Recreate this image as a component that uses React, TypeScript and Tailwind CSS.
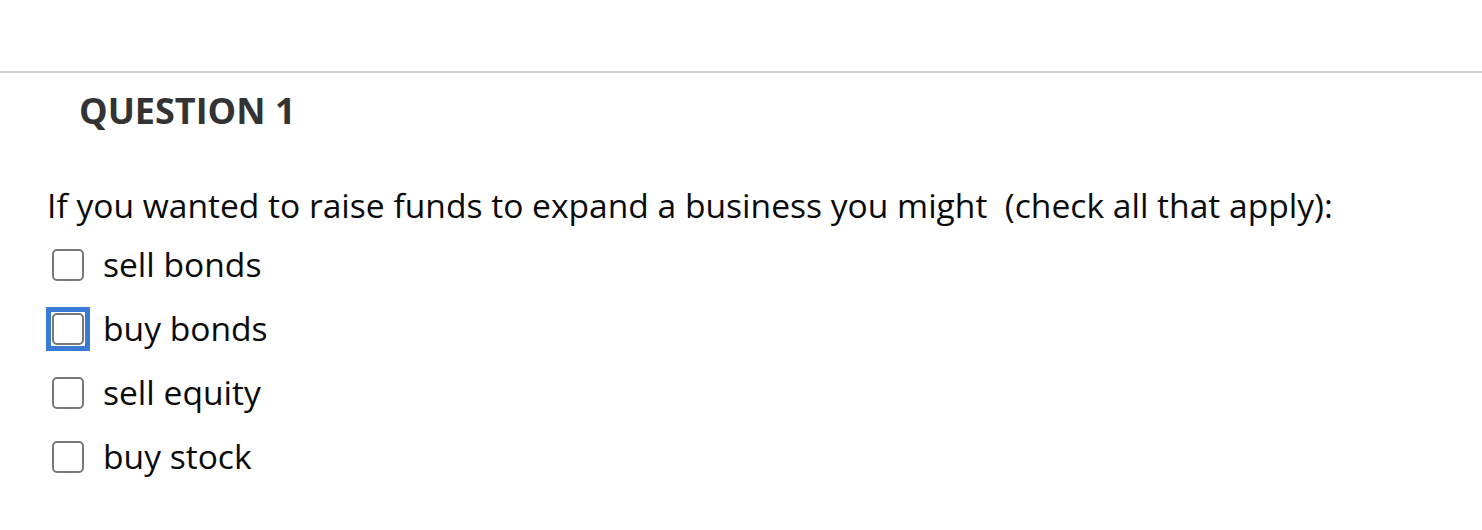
import React from "react";

const options = ["sell bonds", "buy bonds", "sell equity", "buy stock"];

function Box({ focused }: { focused?: boolean }) {
  return (
    <span className="relative mt-[7px] block h-[32px] w-[32px] shrink-0">
      {focused && (
        <span className="absolute -inset-[6px] border-[5px] border-[#3a7bd5] bg-white" />
      )}
      <span className="absolute inset-0 rounded-[5px] border-[2.5px] border-[#777777] bg-white" />
    </span>
  );
}

export default function App() {
  return (
    <div className="min-h-[530px] w-full bg-white" style={{ fontFamily: '"Open Sans", sans-serif' }}>
      <div className="h-[71px]" />
      <div className="h-[2px] bg-[#d3d3d3]" />
      <h1 className="mt-[14px] pl-[79px] text-[36px] font-bold leading-[48px] text-[#333333]">
        QUESTION 1
      </h1>
      <p className="mt-[48px] pl-[47px] text-[33.6px] leading-[44px] text-[#0a0a0a] whitespace-pre">
        If you wanted to raise funds to expand a business you might  (check all that apply):
      </p>
      <div className="mt-[15px] flex flex-col gap-[20px] pl-[52px]">
        {options.map((o, i) => (
          <label key={o} className="flex items-start gap-[19px]">
            <Box focused={i === 1} />
            <span className="text-[33.6px] leading-[44px] text-[#0a0a0a]">{o}</span>
          </label>
        ))}
      </div>
    </div>
  );
}
